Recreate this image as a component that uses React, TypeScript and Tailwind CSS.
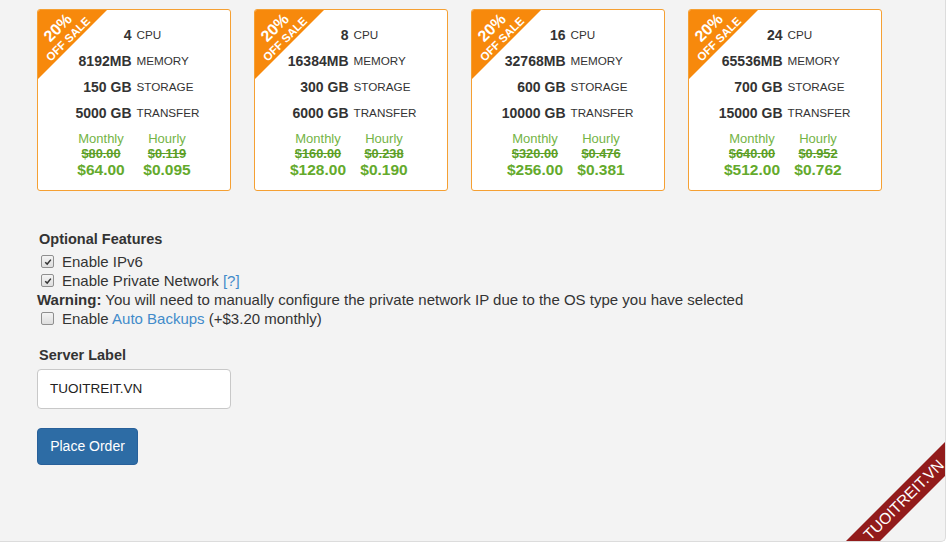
import React from 'react';

interface Plan {
    cpu: string;
    memory: string;
    storage: string;
    transfer: string;
    oldMonthly: string;
    oldHourly: string;
    monthly: string;
    hourly: string;
}

const plans: Plan[] = [
    { cpu: '4', memory: '8192MB', storage: '150 GB', transfer: '5000 GB', oldMonthly: '$80.00', oldHourly: '$0.119', monthly: '$64.00', hourly: '$0.095' },
    { cpu: '8', memory: '16384MB', storage: '300 GB', transfer: '6000 GB', oldMonthly: '$160.00', oldHourly: '$0.238', monthly: '$128.00', hourly: '$0.190' },
    { cpu: '16', memory: '32768MB', storage: '600 GB', transfer: '10000 GB', oldMonthly: '$320.00', oldHourly: '$0.476', monthly: '$256.00', hourly: '$0.381' },
    { cpu: '24', memory: '65536MB', storage: '700 GB', transfer: '15000 GB', oldMonthly: '$640.00', oldHourly: '$0.952', monthly: '$512.00', hourly: '$0.762' },
];

const SaleRibbon: React.FC = () => (
    <>
        <svg className="absolute top-0 left-0 w-[69px] h-[69px]" viewBox="0 0 69 69">
            <polygon points="0,0 69,0 0,69" fill="#f7890c" />
        </svg>
        <div className="absolute left-[20px] top-[18px] -translate-x-1/2 -translate-y-1/2 -rotate-45 text-white font-bold whitespace-nowrap text-[16px] leading-[16px]">
            20%
        </div>
        <div className="absolute left-[30px] top-[29px] -translate-x-1/2 -translate-y-1/2 -rotate-45 text-white font-bold whitespace-nowrap text-[11.5px] leading-[12px]">
            OFF SALE
        </div>
    </>
);

const SpecRow: React.FC<{ value: string; unit: string }> = ({ value, unit }) => (
    <>
        <div className="text-right font-bold text-[14px] leading-[26px] text-[#333] whitespace-nowrap">{value}</div>
        <div className="text-left text-[11.7px] leading-[26px] text-[#333] whitespace-nowrap">{unit}</div>
    </>
);

const PriceCol: React.FC<{ label: string; old: string; price: string }> = ({ label, old, price }) => (
    <div className="flex flex-col items-center text-[#64aa2c] whitespace-nowrap">
        <div className="text-[13px] leading-[15px] text-[#74b446]">{label}</div>
        <div className="text-[12.8px] leading-[15px] font-bold line-through text-[#5d9f27]">{old}</div>
        <div className="text-[15.5px] leading-[17px] font-bold">{price}</div>
    </div>
);

const PlanCard: React.FC<{ plan: Plan }> = ({ plan }) => (
    <div className="relative w-[194px] h-[182px] bg-white border border-[#f5a033] rounded-[3px] overflow-hidden pt-[12px]">
        <SaleRibbon />
        <div className="grid grid-cols-2 gap-x-[5px]">
            <SpecRow value={plan.cpu} unit="CPU" />
            <SpecRow value={plan.memory} unit="MEMORY" />
            <SpecRow value={plan.storage} unit="STORAGE" />
            <SpecRow value={plan.transfer} unit="TRANSFER" />
        </div>
        <div className="grid grid-cols-2 w-[132px] mx-auto mt-[5px]">
            <PriceCol label="Monthly" old={plan.oldMonthly} price={plan.monthly} />
            <PriceCol label="Hourly" old={plan.oldHourly} price={plan.hourly} />
        </div>
    </div>
);

const Check: React.FC<{ checked?: boolean }> = ({ checked }) => (
    <span className="w-[13px] h-[13px] shrink-0 rounded-[2px] border border-[#8f8f8f] bg-gradient-to-b from-[#f4f4f4] to-[#dedede] flex items-center justify-center">
        {checked && (
            <svg viewBox="0 0 10 10" className="w-[8px] h-[8px]">
                <path d="M1.5 5.2 L4 7.6 L8.6 2" fill="none" stroke="#333" strokeWidth="1.8" />
            </svg>
        )}
    </span>
);

export default function App() {
    return (
        <div className="relative w-[946px] h-[542px] bg-[#f3f3f3] border-r border-b border-[#dcdcdc] rounded-br-[5px] overflow-hidden font-['Liberation_Sans',Arial,sans-serif] text-[#333]">
            <div className="pl-[37px] pt-[9px]">
                <div className="flex gap-[23px]">
                    {plans.map((p) => (
                        <PlanCard key={p.cpu} plan={p} />
                    ))}
                </div>

                <div className="mt-[38px] pl-[2px] font-bold text-[14.5px] leading-[20px] mb-[3px]">Optional Features</div>
                <div className="text-[15px] leading-[19px]">
                    <div className="flex items-center gap-[8px] pl-[4px]">
                        <Check checked />
                        <span>Enable IPv6</span>
                    </div>
                    <div className="flex items-center gap-[8px] pl-[4px]">
                        <Check checked />
                        <span>
                            Enable Private Network <a className="text-[#428bca]">[?]</a>
                        </span>
                    </div>
                    <div>
                        <b>Warning:</b> You will need to manually configure the private network IP due to the OS type you have selected
                    </div>
                    <div className="flex items-center gap-[8px] pl-[4px]">
                        <Check />
                        <span>
                            Enable <a className="text-[#428bca]">Auto Backups</a> (+$3.20 monthly)
                        </span>
                    </div>
                </div>

                <div className="mt-[17px] pl-[2px] font-bold text-[14.5px] leading-[20px]">Server Label</div>
                <div className="mt-[4px] w-[194px] h-[40px] bg-white border border-[#c8c8c8] rounded-[4px] pl-[12px] flex items-center text-[13.5px] text-[#222]">
                    TUOITREIT.VN
                </div>
                <button className="mt-[19px] w-[101px] h-[37px] bg-[#2d6ca5] border border-[#28609a] rounded-[4px] text-white text-[14px] flex items-center justify-center">
                    Place Order
                </button>
            </div>

            <div className="absolute left-[804px] top-[488px] w-[200px] h-[24px] -rotate-45 bg-[#921b1b] text-white text-[15.5px] leading-[24px] text-center">
                TUOITREIT.VN
            </div>
        </div>
    );
}
